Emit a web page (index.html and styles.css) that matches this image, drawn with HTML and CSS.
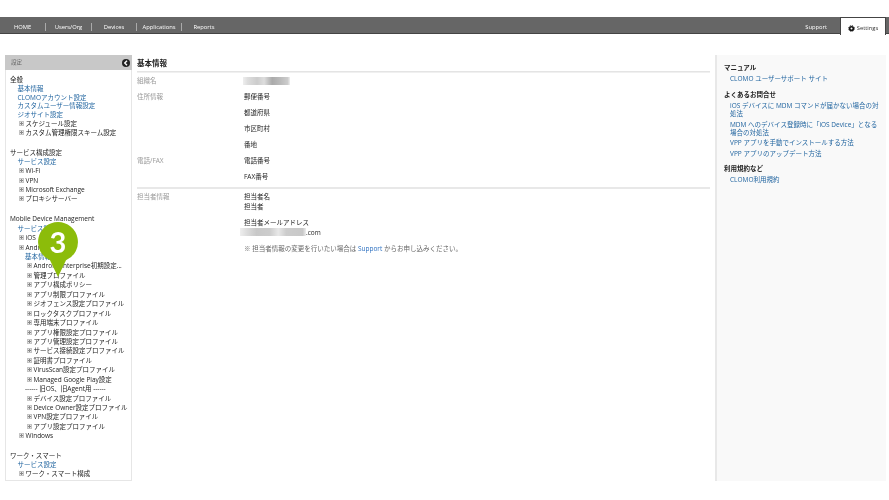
FILE: index.html
```html
<!DOCTYPE html>
<html lang="ja">
<head>
<meta charset="utf-8">
<title>CLOMO 設定</title>
<link rel="stylesheet" href="styles.css">
</head>
<body>
<nav class="nav">
  <ul class="nav-left">
    <li class="nav-home">HOME</li>
    <li class="nav-users">Users/Org</li>
    <li class="nav-devices">Devices</li>
    <li class="nav-apps">Applications</li>
    <li class="nav-reports">Reports</li>
  </ul>
  <div class="nav-right">
    <span class="nav-support">Support</span>
    <span class="nav-settings">
      <svg class="gear" width="7" height="7" viewBox="0 0 14 14" aria-hidden="true">
        <circle cx="7" cy="7" r="5.800" fill="none" stroke="#111" stroke-width="2" stroke-dasharray="2.300 2.250"/>
        <circle cx="7" cy="7" r="3.600" fill="none" stroke="#111" stroke-width="3.200"/>
      </svg>Settings
    </span>
  </div>
</nav>
<div class="page">
  <aside class="side">
    <header class="side-head"><span>設定</span>
      <svg class="collapse" width="8" height="8" viewBox="0 0 16 16" aria-hidden="true">
        <circle cx="8" cy="8" r="8" fill="#222"/>
        <path d="M10 3.500 5.500 8l4.500 4.500" fill="none" stroke="#fff" stroke-width="2.800"/>
      </svg>
    </header>
    <div class="side-body">
      <section class="group group-a">
        <h3>全般</h3>
        <a class="l1">基本情報</a>
        <a class="l1">CLOMOアカウント設定</a>
        <a class="l1">カスタムユーザー情報設定</a>
        <a class="l1">ジオサイト設定</a>
        <p class="t1"><i></i>スケジュール設定</p>
        <p class="t1"><i></i>カスタム管理権限スキーム設定</p>
      </section>
      <section class="group group-b">
        <h3>サービス構成設定</h3>
        <a class="l1">サービス設定</a>
        <p class="t1"><i></i>Wi-Fi</p>
        <p class="t1"><i></i>VPN</p>
        <p class="t1"><i></i>Microsoft Exchange</p>
        <p class="t1"><i></i>プロキシサーバー</p>
      </section>
      <section class="group tree">
        <h3>Mobile Device Management</h3>
        <a class="l1">サービス設定</a>
        <p class="t1"><i></i>iOS</p>
        <p class="t1"><i></i>Android</p>
        <a class="l2">基本情報</a>
        <p class="t2"><i></i>Android Enterprise初期設定...</p>
        <p class="t2"><i></i>管理プロファイル</p>
        <p class="t2"><i></i>アプリ構成ポリシー</p>
        <p class="t2"><i></i>アプリ制限プロファイル</p>
        <p class="t2"><i></i>ジオフェンス設定プロファイル</p>
        <p class="t2"><i></i>ロックタスクプロファイル</p>
        <p class="t2"><i></i>専用端末プロファイル</p>
        <p class="t2"><i></i>アプリ権限設定プロファイル</p>
        <p class="t2"><i></i>アプリ管理設定プロファイル</p>
        <p class="t2"><i></i>サービス接続設定プロファイル</p>
        <p class="t2"><i></i>証明書プロファイル</p>
        <p class="t2"><i></i>VirusScan設定プロファイル</p>
        <p class="t2"><i></i>Managed Google Play設定</p>
        <p class="sep">------ 旧OS、旧Agent用 ------</p>
        <p class="t2"><i></i>デバイス設定プロファイル</p>
        <p class="t2"><i></i>Device Owner設定プロファイル</p>
        <p class="t2"><i></i>VPN設定プロファイル</p>
        <p class="t2"><i></i>アプリ設定プロファイル</p>
        <p class="t1"><i></i>Windows</p>
      </section>
      <section class="group">
        <h3>ワーク・スマート</h3>
        <a class="l1">サービス設定</a>
        <p class="t1"><i></i>ワーク・スマート構成</p>
      </section>
    </div>
    <svg class="pin" width="42" height="58" viewBox="0 0 42 58" aria-hidden="true">
      <path d="M21 1a20 20 0 0 1 8 38.300L21 56l-8-16.700A20 20 0 0 1 21 1z" fill="#8cbc0a"/>
      <text x="21" y="31.500" text-anchor="middle" class="pin-num">3</text>
    </svg>
  </aside>
  <main class="main">
    <h1>基本情報</h1>
    <div class="info">
      <div class="row first"><span class="label">組織名</span><div class="val"><i class="blur blur-org"></i></div></div>
      <div class="row addr"><span class="label">住所情報</span>
        <div class="val stack"><p>郵便番号</p><p>都道府県</p><p>市区町村</p><p>番地</p></div></div>
      <div class="row addr"><span class="label">電話/FAX</span>
        <div class="val stack"><p>電話番号</p><p>FAX番号</p></div></div>
    </div>
    <div class="info contact">
      <div class="row"><span class="label">担当者情報</span>
        <div class="val">
          <p>担当者名</p>
          <p class="v2">担当者</p>
          <p class="v3">担当者メールアドレス</p>
          <p class="mail"><i class="blur blur-mail"></i>.com</p>
          <p class="note">※ 担当者情報の変更を行いたい場合は <a>Support</a> からお申し込みください。</p>
        </div>
      </div>
    </div>
  </main>
  <aside class="help">
    <h4>マニュアル</h4>
    <a>CLOMO ユーザーサポート サイト</a>
    <h4>よくあるお問合せ</h4>
    <a>iOS デバイスに MDM コマンドが届かない場合の対処法</a>
    <a>MDM へのデバイス登録時に「iOS Device」となる場合の対処法</a>
    <a>VPP アプリを手動でインストールする方法</a>
    <a>VPP アプリのアップデート方法</a>
    <h4>利用規約など</h4>
    <a>CLOMO利用規約</a>
  </aside>
</div>
</body>
</html>
```
FILE: styles.css
```css
* { box-sizing: border-box; margin: 0; padding: 0; }
html, body { height: 100%; overflow: hidden; background: #fff; }
body {
  width: 889px;
  height: 500px;
  padding-top: 17px;
  font-family: "Open Sans", "Noto Sans CJK JP", "Liberation Sans", sans-serif;
  font-size: 6.5px;
  line-height: 9px;
  color: #222;
  filter: blur(0.25px);
}
a { color: #1f639f; text-decoration: none; }
i { font-style: normal; }

.nav {
  height: 17px;
  background: #666;
  border-bottom: 1px solid #444;
  display: flex;
  justify-content: space-between;
  color: #fff;
  font-family: "Open Sans", "Liberation Sans", sans-serif;
  font-size: 5.8px;
}
.nav-left { display: flex; list-style: none; margin-top: 6px; height: 8px; line-height: 8px; }
.nav-left li { text-align: center; border-left: 1px solid #aaa; width: 45px; }
.nav-left .nav-home { border-left: 0; }
.nav-left .nav-users { width: 46px; }
.nav-right { display: flex; margin-right: 3px; }
.nav-support { margin: 6px 13px 0 0; line-height: 8px; }
.nav-settings {
  width: 46px;
  height: 18px;
  padding-top: 4px;
  background: #fff;
  color: #333;
  border: 1px solid #444;
  border-bottom: 0;
  display: flex;
  align-items: center;
  justify-content: center;
  gap: 2px;
}

.page {
  display: flex;
  height: 449px;
  margin-top: 21px;
  padding-left: 5px;
}

.side {
  position: relative;
  width: 127px;
  height: 426px;
  background: #fff;
  border: 1px solid #e6e6e6;
  border-top: 0;
  flex: none;
}
.side-head {
  height: 15px;
  margin: 0 -1px;
  background: #c8c8c8;
  color: #666;
  display: flex;
  align-items: center;
  justify-content: space-between;
  padding: 0 2px 0 6px;
  font-size: 5.5px;
}
.side-body { padding: 5px 0 0 4px; }
.group { margin-bottom: 11px; }
.group h3 { font-weight: 400; font-size: 6.5px; height: 9px; color: #222; }
.group a, .group p { display: flex; align-items: center; white-space: nowrap; height: 9px; }
.group-a a, .group-a p { height: 8.850px; }
.group-a h3 { height: 8.850px; }
.group-b a, .group-b p { height: 9.200px; }
.group-b h3 { height: 9.200px; }
.group.tree p, .group.tree a { height: 9.450px; }
.group.tree h3 { height: 9.450px; }
.group.tree { margin-bottom: 10px; }
.l1 { padding-left: 7.500px; }
.t1 { padding-left: 9px; }
.l2 { padding-left: 15px; }
.t2 { padding-left: 17px; }
.sep { padding-left: 15px; }
.group p i {
  width: 5px;
  height: 5px;
  margin-right: 1.500px;
  flex: none;
  border: 1px solid #c4c4c4;
  background: linear-gradient(#888, #888) center / 3px 1px no-repeat, linear-gradient(#888, #888) center / 1px 3px no-repeat, #e8e8e8;
}
.pin { position: absolute; left: 31px; top: 166px; }
.pin-num { font: 700 29px "Lato", "Liberation Sans", sans-serif; fill: #fff; }

.main { width: 573px; margin-left: 5px; flex: none; }
.main h1 {
  font-size: 7.5px;
  font-weight: 700;
  color: #222;
  height: 17px;
  line-height: 16px;
  border-bottom: 1px solid #e4e4e4;
  box-shadow: 0 1px 0 #f0f0f0;
}
.info { padding-top: 1px; }
.row { display: flex; }
.first { height: 15px; align-items: center; }
.addr { align-items: flex-start; }
.addr .label { padding-top: 4px; }
.label { width: 107px; color: #999; flex: none; }
.stack p { height: 16px; line-height: 9px; padding-top: 4px; }
.contact {
  margin-top: 3px;
  padding-top: 3px;
  border-top: 2px solid #e8e8e8;
}
.val p { color: #222; }
.v2 { margin-top: 1px; }
.v3 { margin-top: 7px; }
.mail { display: flex; align-items: center; margin-left: -4px; height: 10px; }
.val .note { margin-top: 7px; color: #666; }
.note a { color: #2b6fc0; }
.blur { display: block; }
.blur-org {
  width: 47px;
  height: 8px;
  margin-left: -1px;
  background: linear-gradient(90deg, #eee 0, #ddd 10%, #ccc 30%, #ddd 45%, #aaa 62%, #bbb 80%, #ccc 95%, #eee 100%);
}
.blur-mail {
  width: 66px;
  height: 8px;
  background: linear-gradient(90deg, #eee 0, #ddd 10%, #c8c8c8 25%, #ccc 45%, #e8e8e8 58%, #ccc 70%, #c8c8c8 95%, #eee 100%);
}

.help {
  width: 171px;
  height: 426px;
  margin-left: 5px;
  flex: none;
  background: #f9f9f9;
  border-left: 2px solid #e8e8e8;
  padding: 8px 6px 0 7px;
}
.help h4 { font-size: 6.5px; font-weight: 700; color: #222; margin-bottom: 3px; }
.help a { display: block; padding-left: 6px; margin-bottom: 1.750px; line-height: 8.500px; }
.help a + h4 { margin-top: 6.250px; }
```
